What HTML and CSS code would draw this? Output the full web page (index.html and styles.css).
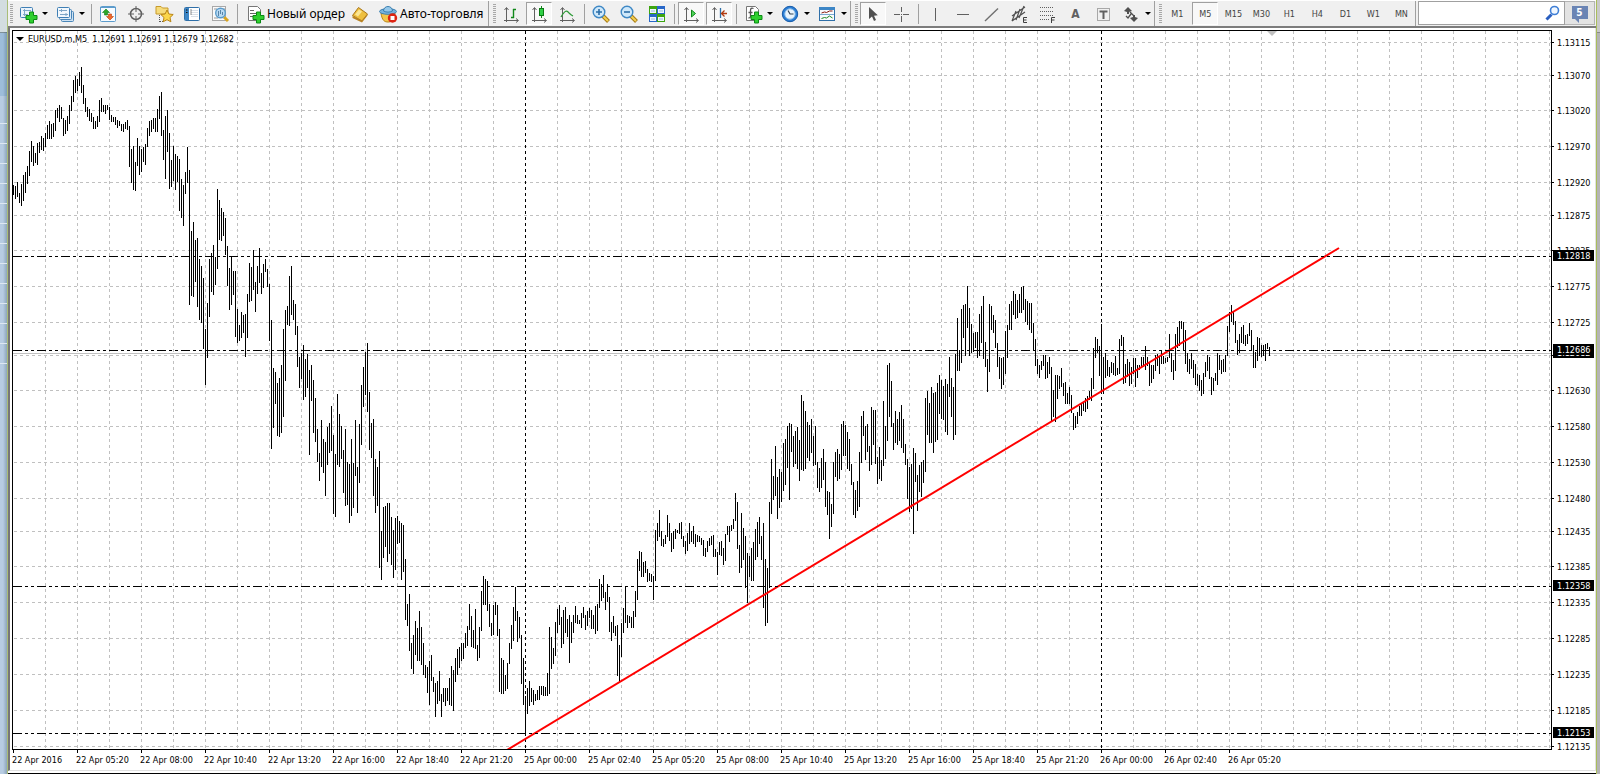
FILE: index.html
```html
<!DOCTYPE html>
<html lang="ru">
<head>
<meta charset="utf-8">
<title>EURUSD.m,M5</title>
<link rel="stylesheet" href="styles.css">
</head>
<body>
<div class="desk-left"></div>
<main class="window">
<header class="toolbar">
  <div class="group" role="toolbar" aria-label="Стандартная">
    <span class="grip"></span>
    <button class="btn drop" aria-label="Новый график"><svg class="icon" viewBox="0 0 20 20"><rect x="2.500" y="3.500" width="12" height="10" rx="1" fill="#eaf3fb" stroke="#3f7fb5"/><path d="M5 6.500h8M5 10.500h5M6.500 5v7" stroke="#7fa6c6"/><path d="M11.500 8h4v3.500H19v4h-3.500V19h-4v-3.500H8v-4h3.500z" fill="#2fd02f" stroke="#0b8a14"/></svg><i class="caret"></i></button>
    <button class="btn drop" aria-label="Профили"><svg class="icon" viewBox="0 0 20 20"><rect x="6.500" y="7.500" width="12" height="10" rx="1" fill="#cfe2f2" stroke="#4a86b8"/><rect x="4.500" y="5.500" width="12" height="10" rx="1" fill="#dceaf6" stroke="#4a86b8"/><rect x="2.500" y="3.500" width="12" height="10" rx="1" fill="#f2f8fd" stroke="#3f7fb5"/><path d="M4 6.500h8M5 10.500h8M6.500 5v3M11 9v3" stroke="#7fa6c6"/></svg><i class="caret"></i></button>
    <span class="sep"></span>
    <button class="btn" aria-label="Обзор рынка"><svg class="icon" viewBox="0 0 20 20"><rect x="2.500" y="2.500" width="15" height="15" rx="1" fill="#f7fbff" stroke="#5d9ccc"/><path d="M2 3.500h16" stroke="#5d9ccc"/><path d="M4.500 8.500L8 5l3.500 3.500H9.500V11h-3V8.500z" fill="#2aa82a" stroke="#157a15" stroke-width=".6"/><path d="M8.500 12.500L12 16l3.500-3.500h-2V10h-3v2.500z" fill="#f26a2c" stroke="#b8410f" stroke-width=".6"/></svg></button>
    <button class="btn" aria-label="Окно данных"><svg class="icon" viewBox="0 0 20 20" fill="none" stroke="#606060"><circle cx="10" cy="10" r="5.500" stroke-width="1.500"/><path d="M10 2v6M10 12v6M2 10h6M12 10h6"/></svg></button>
    <button class="btn" aria-label="Навигатор"><svg class="icon" viewBox="0 0 20 20"><path d="M2 4V2.500h5L8.500 4H14v6H2z" fill="#f6dc7c" stroke="#c79a2a"/><path d="M5.500 11v7M6 17.500h3" stroke="#555" stroke-dasharray="1 1"/><path d="M13 6l1.900 4 4.300.5-3.200 3 .9 4.300L13 15.700 9.100 17.800l.9-4.300-3.200-3 4.300-.5z" fill="#fbd64a" stroke="#b98414"/></svg></button>
    <button class="btn" aria-label="Терминал"><svg class="icon" viewBox="0 0 20 20"><rect x="2.500" y="3.500" width="15" height="13" rx="1" fill="#fff" stroke="#2f6fa8"/><rect x="3" y="4" width="4" height="12" fill="#3d86c6"/><path d="M9 6.500h7M9 8.500h7M9 10.500h7M9 12.500h7" stroke="#d8dfe6"/><path d="M4 6h1.500M4 8.500h1.500" stroke="#111"/><path d="M8.500 6h1M8.500 8h1M8.500 10h1" stroke="#222"/></svg></button>
    <button class="btn" aria-label="Тестер стратегий"><svg class="icon" viewBox="0 0 20 20"><rect x="2.500" y="2.500" width="13" height="14" fill="#fafafa" stroke="#a8a8a8"/><path d="M4 5h3M4 14h4M13 5h2" stroke="#999"/><path d="M14 13l4 4" stroke="#d9a520" stroke-width="3"/><circle cx="10.500" cy="9" r="4.800" fill="#b9daf3" stroke="#5a9bcb" stroke-width="1.400"/><path d="M8.500 7v5M10.500 6v4M12.500 8v3" stroke="#5784a8"/></svg></button>
    <span class="sep"></span>
    <button class="btn wide"><svg class="icon" viewBox="0 0 20 20"><path d="M3.500 2.500h9l3 3v11h-12z" fill="#fff" stroke="#777"/><path d="M5 6.500h4M5 9.500h7M5 12.500h4" stroke="#666"/><path d="M11.500 8h4v3.500H19v4h-3.500V19h-4v-3.500H8v-4h3.500z" fill="#2fd02f" stroke="#0b8a14"/></svg>Новый ордер</button>
    <button class="btn" aria-label="MetaEditor"><svg class="icon" viewBox="0 0 20 20"><path d="M2.500 11.500L8.500 3.500l9 6.500-5.500 7z" fill="#eebf3e" stroke="#a8761a"/><path d="M2.500 12v2L12 18.500l5.500-7V10L12 16.500z" fill="#b98322"/><path d="M5 10.500l4-5 3 2-4 5z" fill="#fbe694"/></svg></button>
    <button class="btn wide auto"><svg class="icon" viewBox="0 0 20 20"><path d="M3 9c1 8 4 9 7 9s6-1 7-9z" fill="#f4c64a" stroke="#b98414"/><ellipse cx="10" cy="7.500" rx="8.500" ry="2.800" fill="#79b4dd" stroke="#3a7fb0"/><path d="M5.500 7c0-6 9-6 9 0-3 1.500-6 1.500-9 0z" fill="#95c8ea" stroke="#3a7fb0"/><circle cx="14.500" cy="14" r="4.700" fill="#dd2413"/><rect x="12.500" y="12" width="4" height="4" fill="#fff"/></svg>Авто-торговля</button>
  </div>
  <div class="group" role="toolbar" aria-label="Графики">
    <span class="grip"></span>
    <button class="btn" aria-label="Бары"><svg class="icon" viewBox="0 0 20 20" fill="none"><path d="M5.500 18V4M3.500 6l2-2.500 2 2.500M3 16.500h14M15 14.500l2.500 2-2.500 2" stroke="#606060"/><path d="M12.500 5v9M10 13.500h3M12 5.500h3" stroke="#11881a" stroke-width="1.400"/></svg></button>
    <button class="btn on" aria-label="Свечи"><svg class="icon" viewBox="0 0 20 20" fill="none"><path d="M5.500 18V4M3.500 6l2-2.500 2 2.500M3 16.500h14M15 14.500l2.500 2-2.500 2" stroke="#606060"/><path d="M12.500 2v12" stroke="#11881a"/><rect x="10.500" y="4.500" width="4" height="7" fill="#2fd046" stroke="#0b7a14"/></svg></button>
    <button class="btn" aria-label="Линия"><svg class="icon" viewBox="0 0 20 20" fill="none"><path d="M5.500 18V4M3.500 6l2-2.500 2 2.500M3 16.500h14M15 14.500l2.500 2-2.500 2" stroke="#606060"/><path d="M4 13c4-7 6-7 8-4 1 1 2 2 4 3" stroke="#2c9a35" stroke-width="1.300"/></svg></button>
    <span class="sep"></span>
    <button class="btn" aria-label="Увеличить"><svg class="icon" viewBox="0 0 20 20"><path d="M11.500 11.500l6 6" stroke="#a87c14" stroke-width="4"/><path d="M12 12l5 5" stroke="#f2cf52" stroke-width="2"/><circle cx="8" cy="8" r="5.800" fill="#cfe8fa" stroke="#3f88c5" stroke-width="1.400"/><path d="M5 8h6M8 5v6" stroke="#2d6fa8" stroke-width="1.600"/></svg></button>
    <button class="btn" aria-label="Уменьшить"><svg class="icon" viewBox="0 0 20 20"><path d="M11.500 11.500l6 6" stroke="#a87c14" stroke-width="4"/><path d="M12 12l5 5" stroke="#f2cf52" stroke-width="2"/><circle cx="8" cy="8" r="5.800" fill="#cfe8fa" stroke="#3f88c5" stroke-width="1.400"/><path d="M5 8h6" stroke="#2d6fa8" stroke-width="1.600"/></svg></button>
    <button class="btn" aria-label="Окна мозаикой"><svg class="icon" viewBox="0 0 20 20"><path d="M2 2h8v8H2z" fill="#3da50f"/><path d="M10 2h8v8h-8zM2 10h8v8H2z" fill="#2867c8"/><path d="M10 10h8v8h-8z" fill="#3da50f"/><path d="M3 5h6v4H3zM11 5h6v4h-6zM3 13h6v4H3zM11 13h6v4h-6z" fill="#eef5ff"/><path d="M4 7h4M12 7h4M4 15h4M12 15h4" stroke="#9bbbe0"/></svg></button>
    <span class="sep"></span>
    <button class="btn on" aria-label="Автопрокрутка"><svg class="icon" viewBox="0 0 20 20" fill="none"><path d="M5.500 18V4M3.500 6l2-2.500 2 2.500M3 16.500h14M15 14.500l2.500 2-2.500 2" stroke="#606060"/><path d="M10.500 6v7l4-3.500z" fill="#4fd45a" stroke="#11881a"/></svg></button>
    <button class="btn on" aria-label="Сдвиг графика"><svg class="icon" viewBox="0 0 20 20" fill="none"><path d="M5.500 18V4M3.500 6l2-2.500 2 2.500M3 16.500h14M15 14.500l2.500 2-2.500 2" stroke="#606060"/><path d="M11.500 4v10" stroke="#2d6fa8" stroke-width="1.300"/><path d="M12.500 9.500H18M15.500 6.500l-3 3 3 3" stroke="#b03a10" stroke-width="1.300"/></svg></button>
    <span class="sep"></span>
    <button class="btn drop" aria-label="Индикаторы"><svg class="icon" viewBox="0 0 20 20"><path d="M3.500 2.500h9l3 3v11h-12z" fill="#fff" stroke="#777"/><path d="M10.500 4.500c-2-1-3 0-3 2v6c0 1-.5 1.500-2 1.500M5.500 8.500h4" fill="none" stroke="#555" stroke-width="1.300"/><path d="M11.500 8h4v3.500H19v4h-3.500V19h-4v-3.500H8v-4h3.500z" fill="#2fd02f" stroke="#0b8a14"/></svg><i class="caret"></i></button>
    <button class="btn drop" aria-label="Периоды"><svg class="icon" viewBox="0 0 20 20"><circle cx="10" cy="10" r="7.700" fill="#2d7fd6" stroke="#155aa8"/><circle cx="10" cy="10" r="5.200" fill="#e9f4fd" stroke="#8fbfe8"/><path d="M8 6.500l2 3.500h3.500" fill="none" stroke="#345" stroke-width="1.200"/></svg><i class="caret"></i></button>
    <button class="btn drop" aria-label="Шаблоны"><svg class="icon" viewBox="0 0 20 20"><rect x="2.500" y="3.500" width="15" height="13" fill="#f8fbfe" stroke="#2f6fa8"/><path d="M2 4.500h16" stroke="#3d86c6" stroke-width="3"/><path d="M3 10.500h14" stroke="#7ba9d0"/><path d="M4.500 9l3-1 2 .5 3-1.500h3" fill="none" stroke="#8a1d10"/><path d="M4.500 14.500l3-1 2 .5 3-2 3 2" fill="none" stroke="#1d8a22"/></svg><i class="caret"></i></button>
  </div>
  <div class="group" role="toolbar" aria-label="Графические инструменты">
    <span class="grip"></span>
    <button class="btn on" aria-label="Курсор"><svg class="icon" viewBox="0 0 20 20"><path d="M6 3v12l3-2.500 2 4.500 2-1-2-4.300 3.800-.4z" fill="#505050"/></svg></button>
    <button class="btn" aria-label="Перекрестие"><svg class="icon" viewBox="0 0 20 20" stroke="#606060"><path d="M10.500 3v5M10.500 12v6M3 10.500h6M12 10.500h6M10 10.500h1"/></svg></button>
    <span class="sep"></span>
    <button class="btn" aria-label="Вертикальная линия"><svg class="icon" viewBox="0 0 20 20" stroke="#606060"><path d="M10.500 4v13"/></svg></button>
    <button class="btn" aria-label="Горизонтальная линия"><svg class="icon" viewBox="0 0 20 20" stroke="#606060"><path d="M4 10.500h12"/></svg></button>
    <button class="btn" aria-label="Трендовая линия"><svg class="icon" viewBox="0 0 20 20" stroke="#707070" stroke-width="1.400"><path d="M4 17L17 4.500"/></svg></button>
    <button class="btn" aria-label="Равноудаленный канал"><svg class="icon" viewBox="0 0 20 20" fill="none" stroke="#505050"><path d="M3 12L16 3M3 17L16 8M3 17L7 7M7 16L11 5M10 14L15 2" stroke-width="1.200"/><path d="M18 13.500h-3.500v5H18M14.500 16h3" stroke="#404040"/></svg></button>
    <button class="btn" aria-label="Уровни Фибоначчи"><svg class="icon" viewBox="0 0 20 20" fill="none" stroke="#606060"><path d="M3 3.500h14M3 7.500h14M3 11.500h14M3 15.500h9" stroke-dasharray="1 1"/><path d="M18 13.500h-3.500V19M14.500 16h3" stroke="#404040"/></svg></button>
    <button class="btn letter" aria-label="Текст">A</button>
    <button class="btn" aria-label="Текстовая метка"><svg class="icon" viewBox="0 0 20 20" fill="none" stroke="#606060"><rect x="4.500" y="4.500" width="12" height="12" stroke-dasharray="1 1"/><path d="M6.500 7.500h8M10.500 7v8" stroke-width="2"/></svg></button>
    <button class="btn drop" aria-label="Стрелки"><svg class="icon" viewBox="0 0 20 20" fill="#505050"><path d="M3 7l4-4 4 4-3 1v2H6V8zM17 14l-4 4-4-4 3-1v-2h2v2z"/><path d="M9 8l4 4M5 12l2 2 3-4" fill="none" stroke="#505050" stroke-width="1.300"/></svg><i class="caret"></i></button>
  </div>
  <div class="group" role="toolbar" aria-label="Периоды">
    <span class="grip"></span>
    <button class="btn">M1</button><button class="btn on">M5</button><button class="btn">M15</button><button class="btn">M30</button><button class="btn">H1</button><button class="btn">H4</button><button class="btn">D1</button><button class="btn">W1</button><button class="btn">MN</button>
  </div>
  <div class="search">
    <input type="text" aria-label="Поиск">
    <svg class="glass" viewBox="0 0 16 16" fill="none"><path d="M1.500 14.500L6.500 9.500" stroke="#2a5fc0" stroke-width="3"/><circle cx="9.500" cy="5.500" r="4" fill="#f0f7ff" stroke="#3f7fd6" stroke-width="1.600"/></svg>
  </div>
  <button class="chat" aria-label="Сообщения"><span class="bubble">5</span></button>
</header>
<section class="chart">
  <svg class="plot" id="plot" role="img" aria-label="EURUSD.m,M5"></svg>
  <svg class="prices" id="prices"></svg>
  <svg class="times" id="times"></svg>
</section>
<footer class="tabs"><span class="tab"></span></footer>
</main>
<div class="desk-right"></div>
<script src="script.js"></script>
</body>
</html>
```
FILE: styles.css
```css
* { box-sizing: border-box; }
body {
  margin: 0;
  height: 100vh;
  display: flex;
  overflow: hidden;
  background: #fff;
  font-family: "DejaVu Sans Condensed", "DejaVu Sans", sans-serif;
  font-size: 9px;
  color: #000;
}
.desk-left {
  flex: 0 0 8px;
  border-right: 1px solid #a9bd78;
  background:
    repeating-linear-gradient(transparent 0 19px, #dfe8f1 19px 20px) 0 104px / 100% 270px no-repeat,
    linear-gradient(90deg, transparent 3px, rgba(60, 90, 110, .35)) 0 32px / 100% 100% no-repeat,
    linear-gradient(#d3dde0 0 32px, #7d8f98 32px 33px, #9dbdda 33px 96px, #b7cce2 96px);
}
.desk-right {
  flex: 0 0 4px;
  border-left: 1px solid #a9bd5c;
  background: linear-gradient(#c9c9c9 0 32px, #8a8a8a 32px 33px, #b4b4b4 33px);
}
.window { flex: 1; min-width: 0; display: flex; flex-direction: column; }

.toolbar {
  flex: 0 0 28px;
  display: flex;
  background: #f0f0f0;
  border-top: 1px solid #fff;
  border-bottom: 2px solid #7c7c7c;
}
.group {
  flex: none;
  display: flex;
  align-items: center;
  border-right: 1px solid #a0a0a0;
  margin-right: 2px;
}
.group:first-child { padding-right: 3px; }
.grip {
  width: 3px;
  height: 19px;
  margin: 0 1px 0 2px;
  background: repeating-linear-gradient(#a8a8a8 0 1px, #f0f0f0 1px 2px);
}
.sep { width: 1px; height: 20px; margin: 0 2px 0 3px; background: #a0a0a0; }
.btn {
  width: 28px;
  height: 23px;
  padding: 0;
  border: 0;
  background: none;
  display: flex;
  align-items: center;
  justify-content: center;
  font: inherit;
  color: #444;
  white-space: nowrap;
}
.btn.on {
  width: 26px;
  margin: 0 1px;
  border: 1px solid #fff;
  border-top-color: #a0a0a0;
  border-left-color: #a0a0a0;
  background: #f8f8f8;
}
.btn.drop { width: 37px; gap: 4px; }
.btn.wide {
  width: auto;
  padding: 0 1px 0 5px;
  gap: 2px;
  font: 12px "Noto Sans", "Open Sans", sans-serif;
  color: #000;
}
.btn.auto { padding: 0 2px 0 4px; }
.btn.letter { font: bold 12px "DejaVu Sans Condensed", sans-serif; color: #606060; }
.icon { width: 20px; height: 20px; flex: none; }
.caret { width: 6px; height: 3px; border: 3px solid transparent; border-top-color: #000; border-bottom: 0; }

.search {
  flex: 1 1 0;
  min-width: 0;
  display: flex;
  align-items: center;
  background: #fff;
  border: 1px solid #a0a0a0;
  margin: 0 0 1px;
}
.search input { flex: 1 1 0; width: 0; min-width: 0; border: 0; outline: 0; background: none; }
.glass { flex: none; width: 16px; height: 16px; margin-right: 3px; }
.chat {
  flex: 0 0 30px;
  padding: 0;
  border: 1px solid #b4b4b4;
  border-left: 0;
  margin: 0 1px 1px 0;
  background: #e3e3e3;
  display: flex;
  align-items: center;
  justify-content: center;
}
.bubble {
  position: relative;
  width: 16px;
  height: 13px;
  margin-bottom: 2px;
  background: #6a84b4;
  color: #fff;
  font: bold 10px/13px "DejaVu Sans Condensed", sans-serif;
}
.bubble::after {
  content: "";
  position: absolute;
  left: 3px;
  top: 13px;
  border: 2px solid transparent;
  border-top-color: #6a84b4;
  border-right-color: #6a84b4;
}

.chart {
  flex: 1;
  min-height: 0;
  display: grid;
  grid-template-columns: minmax(0, 1fr) 43px;
  grid-template-rows: minmax(0, 1fr) 20px;
  padding: 2px 0 0 2px;
  border-left: 2px solid #777;
  border-right: 1px solid #e0e0e0;
  border-bottom: 1px solid #e0e0e0;
  background: #fff;
}
.chart svg { display: block; width: 100%; height: 100%; }
.plot { border: 1px solid #000; }
.prices, .times { overflow: visible; }
.chart text { font-family: "DejaVu Sans Condensed", "DejaVu Sans", sans-serif; font-size: 9px; white-space: pre; }
.grid, .bars, .period, .level, .bid, .tick { fill: none; shape-rendering: crispEdges; stroke: #000; }
.grid { stroke: #c0c0c0; stroke-dasharray: 3 3; }
.period { stroke-dasharray: 3 3; }
.level { stroke-dasharray: 9 3 3 3 3 3; }
.bid { stroke: #c0c0c0; }
.trend { fill: none; stroke: #f00; stroke-width: 2; }
.shift { fill: #c0c0c0; }
.badge { fill: #000; }
.chart text.inverse { fill: #fff; }

.tabs { flex: 0 0 2px; border-bottom: 1px solid #000; background: #fff; }
.tab { display: block; width: 98px; height: 2px; margin-left: 7px; background: #fff; }
```
FILE: script.js
```javascript
// Bar runs: first x, then "high-low" pairs two pixels apart.
const runs = [
  [0, "185-195 186-199 182-197 193-203 184-206 175-201 172-193 166-184 151-176 141-162 146-166 153-163 143-165 142-153 136-150 138-151 133-147 125-139 121-139 124-139 123-137 110-131 108-118 105-122 107-119 118-136 120-134 116-131 105-124 96-111 80-102 76-93 79-91 72-86 67-93 85-104 98-112 107-117 109-121 113-122 117-129 121-129 116-127 100-122 98-112 105-112 105-114 105-110 107-120 115-122 117-122 117-125 120-128 121-126 124-131 124-132 122-129 120-130 126-167 149-183 146-190 162-191 138-166 146-175 149-172 147-162 144-165 128-147 121-136 120-132 118-129 118-132 109-132 96-119 92-136 130-160 116-179 110-152 133-189 160-187 146-181 154-190 156-182 159-211 179-218 185-226 172-194 147-183 170-305 231-296 222-297 240-282 238-307 259-320 266-323 278-349 329-385 303-358"],
  [196, "259-317 253-292 245-295 257-285 189-269 200-240 208-241 212-236 218-255 246-286 268-310 256-305 271-295 271-337 309-343 325-341 312-338 315-333 314-357 294-338 263-302 267-301 250-290 282-312 266-294 248-283 273-294 264-288 259-272 269-287 284-341 320-449 368-428 372-404 383-436 378-437 365-433 329-417 310-381 306-325 276-326 266-315 300-320 304-335 326-367 357-388 353-379 345-400 359-397 354-388 370-455 365-401 380-433 398-442"],
  [304, "429-462 453-481 420-467 439-473 442-496 427-465 423-453 406-451 435-514 454-517 394-465 414-467 426-459 450-493 429-506 462-505 464-523 439-516 463-508 420-476 467-513 424-483 385-445 367-407 352-395 343-412 392-450 423-458 419-496 459-513 467-506 451-568 531-580 507-558 506-547 503-562 503-554 517-565 530-578 518-570 516-544 521-543 523-580 525-572 559-620 604-626 594-651 643-669 635-674 621-655 628-661 611-661 627-665 643-675"],
  [412, "665-678 667-693 661-705 655-681 677-692 683-717 681-704 671-701 694-717 688-702 688-706 688-701 678-705 666-706 670-711 658-682 649-675 647-668 643-661 643-659 633-648 626-646 604-630 616-647 630-648 609-649 645-661 627-658 591-631 576-605 579-605 581-611 604-627 623-636 605-635 602-615 605-636 629-692 658-694 660-694 675-691 663-689 643-664 625-649 607-641 587-621 611-642 617-638 635-684 658-705 696-734"],
  [514, "688-714 681-706 688-702 690-705 694-701 690-700 686-700 686-695 686-696 687-696 673-696 627-694 637-669 648-664 622-656 609-633 605-625 617-648 610-644 607-633 619-637 615-663 622-643 615-633 606-623 615-624 620-624 613-628 607-618 615-630 611-626 608-618 610-629 615-629 606-634 604-631 579-608 584-601 575-598 592-610 584-602 597-632 622-641 616-633 626-636 625-676 645-682 623-657 608-633 586-623 615-628 616-623 617-628 611-628 591-617"],
  [624, "559-600 551-571 552-577 562-577 561-573 569-582 573-581 574-582 576-600 530-581 523-541 510-537 531-546 539-547 535-544 515-537 523-541 533-552 531-549 529-539 530-533 523-534 522-539 536-547 541-554 533-551 523-544 531-542 526-544 534-547 535-542 536-542 538-545 540-556 548-557 541-552 538-546 536-545 535-557 549-557 552-575 542-555 541-556 548-565 534-561 526-535 526-542 525-531 519-529 493-521 502-549 545-573 513-568 528-560 536-588 553-603 556-577 548-581 542-581 529-560 522-557 517-544 536-560 523-608 559-626 568-623 502-588"],
  [758, "459-514 476-500 446-496 477-519 469-508 472-502 443-491 439-485 426-468 423-500 424-452 436-467 431-464 427-469 440-481 395-470 401-471 411-469 422-458 425-461 419-453 436-466 426-465 462-488 468-492 458-488 449-480 462-507 491-515 492-539 504-527 462-514 452-477 449-481 454-479 424-470 421-456 425-456 432-469 439-471 464-485 482-515 490-518 481-511 452-507 416-463 411-436 426-460 424-452 446-471 407-465 410-445 410-464 457-484 447-479 460-481 401-466 426-459"],
  [874, "365-441 363-417 381-427 423-450 411-443 419-445 412-441 405-448 419-453 444-465 459-499 467-512 464-509 448-534 453-482 475-511 465-492 462-497 460-483 398-472 391-435 403-443 387-443 393-453 392-442 383-440 375-414 380-419 386-420 379-432 384-435 357-397 378-417 387-440 354-435 318-371 350-371 309-363 305-338 304-356 286-328 308-356 324-353 333-352 332-348 332-358 314-356 306-343 296-359 342-367 359-392 304-372 306-330 315-333 320-348 343-367 357-379 358-389 357-385 331-374 325-358 304-330 301-330 291-315 294-319 300-318 294-313 287-313 286-310 299-322 301-325 303-330 303-333 323-351 339-366 359-374 365-378 361-370 355-366 355-379 362-378 357-374"],
  [1038, "367-422 390-417 375-422 375-399 376-389 368-387 383-396 382-404 393-404 387-404 395-413 413-430 416-428 412-424 406-416 404-416 403-411 398-412 396-409 391-400 378-401 348-389 337-358 339-353 346-376 324-394 357-394 353-378 360-376 367-377 362-373 363-375 356-376 368-375 339-374 335-346 337-384 364-383 359-377 362-386 367-384 358-374 358-387 365-378 365-370 357-367 357-367 346-370 357-366 362-386 365-383 365-379 355-371 354-366 356-374 350-364 356-364 358-363 357-362 334-358 353-372 360-380 334-371 327-348 321-346 321-329 322-351 330-364 353-372 359-374 353-369 360-378"],
  [1182, "364-385 374-386 375-391 380-396 373-394 362-377 355-371 357-379 377-395 378-391 373-381 353-385 355-370 360-374 359-372 355-372 326-356 312-332 305-322 312-325 321-343 340-355 334-353 327-343 325-344 335-346 334-344 323-336 330-350 345-368 352-368 337-361 338-356 345-357 345-356 344-361 343-349 347-356"]
];
const prices = [
  [42, "1.13115"], [75, "1.13070"], [110, "1.13020"], [146, "1.12970"], [182, "1.12920"],
  [215, "1.12875"], [250, "1.12835"], [286, "1.12775"], [322, "1.12725"], [355, ""],
  [390, "1.12630"], [426, "1.12580"], [462, "1.12530"], [498, "1.12480"], [531, "1.12435"],
  [566, "1.12385"], [602, "1.12335"], [638, "1.12285"], [674, "1.12235"], [710, "1.12185"], [746, "1.12135"]
];
const badges = [[353, "1.12682"], [350, "1.12686"], [256, "1.12818"], [586, "1.12358"], [733, "1.12153"]];
const times = ["22 Apr 2016", "22 Apr 05:20", "22 Apr 08:00", "22 Apr 10:40", "22 Apr 13:20", "22 Apr 16:00",
  "22 Apr 18:40", "22 Apr 21:20", "25 Apr 00:00", "25 Apr 02:40", "25 Apr 05:20", "25 Apr 08:00", "25 Apr 10:40",
  "25 Apr 13:20", "25 Apr 16:00", "25 Apr 18:40", "25 Apr 21:20", "26 Apr 00:00", "26 Apr 02:40", "26 Apr 05:20"];

const TOP = 31;
const hline = (cls, y, from) => `<line class="${cls}" x1="${from}" x2="100%" y1="${y - TOP + 0.5}" y2="${y - TOP + 0.5}"/>`;
const vline = (cls, x) => `<line class="${cls}" x1="${x + 0.5}" x2="${x + 0.5}" y1="0" y2="100%"/>`;

let plot = "";
for (const [y] of prices) plot += hline("grid", y, 1);
for (let x = 32; x < 1538; x += 32) plot += vline(x === 512 || x === 1088 ? "period" : "grid", x);
plot += hline("bid", 353, 0);

let d = "";
for (const [start, list] of runs) {
  list.split(" ").forEach((bar, i) => {
    const [high, low] = bar.split("-");
    d += `M${start + 2 * i + 0.5} ${high - TOP}V${low - TOP}`;
  });
}
plot += `<path class="bars" d="${d}"/>`;
plot += `<path class="trend" d="M494 719L1326 217"/>`;
for (const y of [256, 350, 586, 733]) plot += hline("level", y, 0);
plot += `<path class="shift" d="M1254 0h10l-5 5z"/><path d="M3 6h8l-4 4z"/>`;
plot += `<text x="15" y="11">EURUSD.m,M5  1.12691 1.12691 1.12679 1.12682</text>`;
document.getElementById("plot").innerHTML = plot;

let axis = "";
for (const [y, label] of prices) {
  axis += `<path class="tick" d="M0 ${y - 29.5}h2"/><text x="5" y="${y - 26}">${label}</text>`;
}
for (const [y, label] of badges) {
  axis += `<rect class="badge" x="1" y="${y - 36}" width="41" height="11"/><text class="inverse" x="5" y="${y - 27}">${label}</text>`;
}
document.getElementById("prices").innerHTML = axis;

document.getElementById("times").innerHTML = times.map((label, i) =>
  `<path class="tick" d="M${64 * i + 1.5} 0v3"/><text x="${64 * i}" y="13">${label}</text>`).join("");
```
